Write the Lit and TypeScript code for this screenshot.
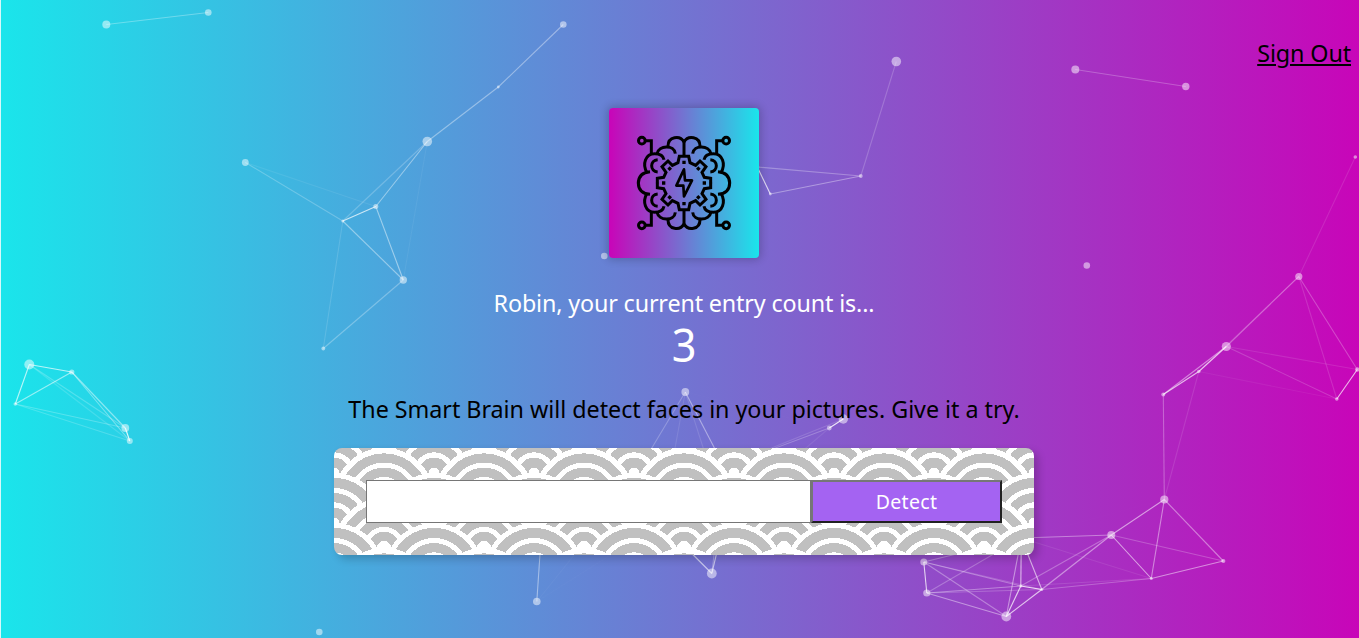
import { LitElement, html, css, svg } from "lit";
import { customElement } from "lit/decorators.js";

type Dot = [number, number, number];

const DOTS: Dot[] = [
  [106, 24.5, 4], [208, 12.5, 3.3], [563, 24.5, 3.3], [498, 87, 1.4], [427, 141.5, 4.8],
  [245, 162.5, 3.4], [375.5, 206.5, 2.5], [342.5, 221, 1.5], [403, 280, 3.7], [323, 348.5, 1.9],
  [29, 364.5, 5], [71.5, 372, 2.6], [15, 404, 1.8], [125, 428, 3.9], [129.5, 441, 3],
  [896, 61.5, 4.8], [860.5, 176, 1.9], [770, 194, 1.4], [757, 167, 2], [604, 256, 3.3],
  [1075, 69.5, 4], [1185.5, 86.5, 3.7], [1355, 157, 1.8], [1086.5, 265.5, 3.3],
  [1298.5, 276.5, 3.6], [1226, 346.5, 4.6], [1198.5, 371.5, 1.8], [1163, 394.5, 2],
  [1336.5, 399, 1.8], [1357, 369.5, 2.2], [685, 392, 3.9], [843, 419, 4.7], [829, 428, 2.4],
  [1164, 499.5, 4.1], [1111, 535, 4], [1223, 561, 2.1], [1151, 578.5, 1.5], [1020.5, 586, 1.5],
  [1041.5, 589.5, 1.5], [1006, 616.5, 4.9], [926.5, 593, 3.6], [923.5, 562, 3.5], [1021, 538, 2],
  [711.5, 573.5, 4.9], [536.5, 601.5, 3.8], [319, 632, 3.3], [542, 520, 2],
  [627, 489, 2], [661, 523, 2], [725, 517, 2], [724, 467, 2],
];

const REACH = 150;

@customElement("particle-field")
class ParticleField extends LitElement {
  static styles = css`
    :host { display: block; }
    svg { display: block; }
  `;
  render() {
    const links = [];
    for (let i = 0; i < DOTS.length; i++) {
      for (let j = i + 1; j < DOTS.length; j++) {
        const [x1, y1] = DOTS[i];
        const [x2, y2] = DOTS[j];
        const d = Math.hypot(x1 - x2, y1 - y2);
        if (d < REACH) {
          links.push(svg`<line x1=${x1} y1=${y1} x2=${x2} y2=${y2} stroke="#fff" stroke-width="1.1" stroke-opacity=${(0.95 * (1 - d / REACH)).toFixed(3)} />`);
        }
      }
    }
    return html`<svg width="1359" height="638" viewBox="-0.3 0 1359 638">
      ${DOTS.map(([x, y, r]) => svg`<circle cx=${x} cy=${y} r=${r} fill="#fff" fill-opacity="0.5" />`)}
      ${links}
    </svg>`;
  }
}

@customElement("brain-logo")
class BrainLogo extends LitElement {
  static styles = css`
    :host {
      display: block;
      width: 150px;
      height: 150px;
      border-radius: 4px;
      background: linear-gradient(270deg, #1ae5eb 0%, #c904b8 100%);
      box-shadow: 0 0 8px 2px rgba(0, 0, 0, 0.2);
    }
    svg { display: block; }
  `;
  render() {
    const quarter = svg`
      <circle cx="125.500" cy="137" r="10" />
      <path d="M136 137H154V178" />
      <path d="M252 141C240 120 204 124 204 154" />
      <path d="M171 176C176 150 223 148 226 176" />
      <path d="M141 233C126 207 136 176 164 176C180 176 190 183 192 194" />
      <path d="M173 194C149 196 149 229 173 231" />
      <path d="M150 230C125 232 115 247 115 265" />
      <path d="M252 184H238L234 203L217 211L204 198L186 215L198 232L191 247L172 250V265" />
      <path class="fill" d="M209 214L216 221L209 228L202 221Z" />`;
    return html`<svg width="150" height="150" viewBox="27 39 450 450">
      <style>.s{fill:none;stroke:#000;stroke-width:9;stroke-linejoin:miter}.fill{fill:#000;stroke:none}</style>
      <g class="s">
        <g>${quarter}</g>
        <g transform="matrix(-1 0 0 1 504 0)">${quarter}</g>
        <g transform="matrix(1 0 0 -1 0 528)">${quarter}</g>
        <g transform="matrix(-1 0 0 -1 504 528)">${quarter}</g>
        <path d="M252 137V184M252 344V391" />
        <path stroke-width="8" stroke-linejoin="round" d="M252 223L229 272H250L252 304L276 256H255Z" />
        <path class="fill" d="M247 197h10v10h-10zM247 321h10v10h-10zM186 259h10v10h-10zM308 259h10v10h-10z" />
      </g>
    </svg>`;
  }
}

@customElement("image-form")
class ImageForm extends LitElement {
  static styles = css`
    :host {
      display: flex;
      box-sizing: border-box;
      width: 700px;
      height: 107px;
      padding: 32px;
      border-radius: 8px;
      box-shadow: 4px 4px 8px 0 rgba(0, 0, 0, 0.2);
      background-color: silver;
      background-image:
        radial-gradient(circle at 100% 150%, silver 24%, white 24%, white 28%, silver 28%, silver 36%, white 36%, white 40%, transparent 40%, transparent),
        radial-gradient(circle at 0 150%, silver 24%, white 24%, white 28%, silver 28%, silver 36%, white 36%, white 40%, transparent 40%, transparent),
        radial-gradient(circle at 50% 100%, white 10%, silver 10%, silver 23%, white 23%, white 30%, silver 30%, silver 43%, white 43%, white 50%, silver 50%, silver 63%, white 63%, white 71%, transparent 71%, transparent),
        radial-gradient(circle at 100% 50%, white 5%, silver 5%, silver 15%, white 15%, white 20%, silver 20%, silver 29%, white 29%, white 34%, silver 34%, silver 44%, white 44%, white 49%, transparent 49%, transparent),
        radial-gradient(circle at 0 50%, white 5%, silver 5%, silver 15%, white 15%, white 20%, silver 20%, silver 29%, white 29%, white 34%, silver 34%, silver 44%, white 44%, white 49%, transparent 49%, transparent);
      background-size: 100px 50px;
    }
    .url {
      box-sizing: border-box;
      width: 445.2px;
      height: 43px;
      margin: 0;
      padding: 8px;
      border: 1px solid #767676;
      border-radius: 0;
      background: #fff;
      font: 20px "Noto Sans", sans-serif;
    }
    .detect {
      box-sizing: border-box;
      width: 190.8px;
      height: 43px;
      margin: 0;
      padding: 0;
      border: 2px solid;
      border-color: #767676 #212121 #212121 #767676;
      border-radius: 0;
      background: #a463f2;
      color: #fff;
      font: 19.5px/37px "Noto Sans", sans-serif;
      letter-spacing: 0.35px;
    }
  `;
  render() {
    return html`<input class="url" type="text" /><button class="detect">Detect</button>`;
  }
}

@customElement("app-root")
class AppRoot extends LitElement {
  static styles = css`
    :host {
      display: block;
      position: relative;
      width: 1359px;
      height: 638px;
      overflow: hidden;
      background: #d5f8fa;
      font-family: "Noto Sans", sans-serif;
    }
    .page {
      box-sizing: border-box;
      width: 1366px;
      height: 638px;
      margin-left: 1px;
      background: linear-gradient(90deg, #1ae5eb 0%, #c904b8 100%);
    }
    particle-field { position: absolute; left: 0; top: 0; }
    .content { position: relative; display: flex; flex-direction: column; align-items: center; }
    nav { align-self: stretch; display: flex; justify-content: flex-end; height: 108px; box-sizing: border-box; padding: 36px 16px 0 0; }
    p { margin: 0; white-space: nowrap; }
    .signout { font-size: 23.3px; line-height: 34px; letter-spacing: -0.1px; text-decoration: underline; text-decoration-thickness: 2px; text-underline-offset: 2px; color: #000; }
    .greeting { margin-top: 28px; font-size: 23.3px; line-height: 34px; letter-spacing: -0.14px; color: #fff; }
    .count { margin-bottom: 2px; font-size: 46px; line-height: 48px; color: #fff; transform: scaleX(0.94); }
    .intro { margin-top: 22px; margin-bottom: 22px; font-size: 23.3px; line-height: 34px; letter-spacing: -0.03px; color: #000; }
  `;
  render() {
    return html`<div class="page">
      <particle-field></particle-field>
      <div class="content">
        <nav><p class="signout">Sign Out</p></nav>
        <brain-logo></brain-logo>
        <p class="greeting">Robin, your current entry count is...</p>
        <p class="count">3</p>
        <p class="intro">The Smart Brain will detect faces in your pictures. Give it a try.</p>
        <image-form></image-form>
      </div>
    </div>`;
  }
}
